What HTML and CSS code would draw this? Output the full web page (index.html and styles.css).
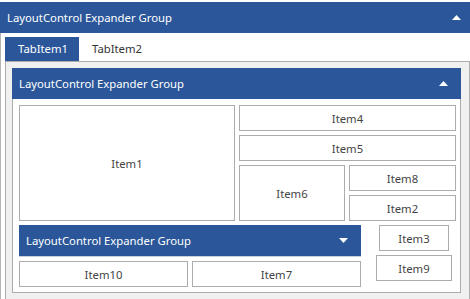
FILE: index.html
```html
<!DOCTYPE html>
<html lang="en">
<head>
<meta charset="UTF-8" />
<title>LayoutControl</title>
<link rel="stylesheet" href="styles.css">
</head>
<body>

<div class="group outer">
  <div class="group-head">
    <span>LayoutControl Expander Group</span>
    <svg class="arrow" width="9" height="5" viewBox="0 0 9 5"><polygon points="0,5 4.5,0 9,5" fill="#fff"/></svg>
  </div>
  <div class="outer-body">
    <div class="tabs">
      <div class="tab active">TabItem1</div>
      <div class="tab">TabItem2</div>
    </div>
    <div class="tab-panel">
      <div class="group inner">
        <div class="group-head">
          <span>LayoutControl Expander Group</span>
          <svg class="arrow" width="9" height="5" viewBox="0 0 9 5"><polygon points="0,5 4.5,0 9,5" fill="#fff"/></svg>
        </div>
        <div class="inner-body">
          <div class="row-top">
            <div class="item item1">Item1</div>
            <div class="col-right">
              <div class="item">Item4</div>
              <div class="item">Item5</div>
              <div class="split">
                <div class="item item6">Item6</div>
                <div class="stack">
                  <div class="item">Item8</div>
                  <div class="item">Item2</div>
                </div>
              </div>
            </div>
          </div>
          <div class="row-bottom">
            <div class="col-left">
              <div class="group-head collapsed">
                <span>LayoutControl Expander Group</span>
                <svg class="arrow" width="9" height="5" viewBox="0 0 9 5"><polygon points="0,0 4.5,5 9,0" fill="#fff"/></svg>
              </div>
              <div class="pair">
                <div class="item">Item10</div>
                <div class="item">Item7</div>
              </div>
            </div>
            <div class="col-small">
              <div class="item item3">Item3</div>
              <div class="item item9">Item9</div>
            </div>
          </div>
        </div>
      </div>
    </div>
  </div>
</div>

</body>
</html>
```

FILE: styles.css
```css
body {
  margin: 0;
  width: 470px;
  height: 299px;
  overflow: hidden;
  background: #fff;
  font-family: "Noto Sans", "Open Sans", Arial, sans-serif;
  font-size: 11.3px;
  color: #444;
}
.outer {
  margin-top: 2px;
  width: 470px;
  height: 297px;
  overflow: hidden;
}
.group-head {
  height: 31px;
  background: #2b579a;
  color: #fff;
  display: flex;
  align-items: center;
  justify-content: space-between;
  box-sizing: border-box;
}
.arrow {
  flex: none;
}
.outer > .group-head {
  padding: 0 9px 0 7px;
}
.outer-body {
  border-left: 1px solid #b4b4b4;
  padding: 4px 0 0 4px;
}
.tabs {
  display: flex;
  height: 24px;
}
.tab {
  padding: 0 13px;
  line-height: 24px;
  color: #333;
}
.tab.active {
  background: #2b579a;
  color: #fff;
  width: 48px;
}
.tab-panel {
  width: 465px;
  box-sizing: border-box;
  border: 1px solid #acacac;
  background: #f0f0f0;
  padding: 6px 8px 6px 6px;
}
.inner {
  width: 449px;
}
.inner > .group-head {
  padding: 0 13px 0 7px;
}
.inner-body {
  border: 1px solid #acacac;
  border-top: none;
  background: #fff;
  padding: 6px 4px 5px 6px;
  display: flex;
  flex-direction: column;
  gap: 4px;
}
.item {
  box-sizing: border-box;
  border: 1px solid #acacac;
  background: #fff;
  height: 26px;
  display: flex;
  align-items: center;
  justify-content: center;
}
.row-top {
  display: flex;
  gap: 4px;
  height: 116px;
}
.item1 {
  width: 216px;
  height: 116px;
}
.col-right {
  width: 217px;
  display: flex;
  flex-direction: column;
  gap: 4px;
}
.split {
  display: flex;
  gap: 4px;
}
.item6 {
  width: 106px;
  height: 56px;
}
.stack {
  flex: 1;
  display: flex;
  flex-direction: column;
  gap: 4px;
}
.row-bottom {
  display: flex;
  gap: 4px;
}
.col-left {
  width: 342px;
}
.collapsed {
  padding: 0 13px 0 7px;
  border-bottom: 1px solid #c6d0de;
  height: 32px;
}
.pair {
  display: flex;
  gap: 4px;
  margin-top: 4px;
}
.pair .item {
  flex: 1;
}
.col-small {
  flex: 1;
  display: flex;
  flex-direction: column;
  align-items: center;
  gap: 4px;
  padding-left: 7px;
}
.item3 {
  width: 70px;
}
.item9 {
  width: 76px;
}
```
